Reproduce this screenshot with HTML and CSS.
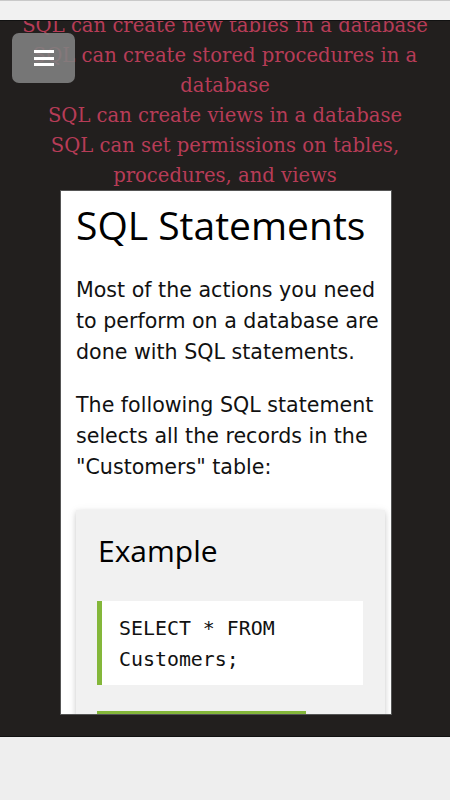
FILE: index.html
```html
<!DOCTYPE html>
<html>
<head>
<meta charset="utf-8">
<link rel="stylesheet" href="styles.css">
</head>
<body>
<div class="topbar"></div>
<div class="main">
  <div class="intro">
    <div class="line">SQL can create new tables in a database</div>
    <div class="line">SQL can create stored procedures in a database</div>
    <div class="line">SQL can create views in a database</div>
    <div class="line">SQL can set permissions on tables, procedures, and views</div>
  </div>
  <div class="card">
    <h1 class="title">SQL Statements</h1>
    <p class="para">Most of the actions you need to perform on a database are done with SQL statements.</p>
    <p class="para">The following SQL statement selects all the records in the "Customers" table:</p>
    <div class="example">
      <h2 class="ex-title">Example</h2>
      <div class="code">SELECT * FROM<br>Customers;</div>
      <div class="btn"></div>
    </div>
  </div>
  <button class="menu" aria-label="menu">
    <span class="bar"></span><span class="bar"></span><span class="bar"></span>
  </button>
</div>
<div class="bottom"></div>
</body>
</html>
```
FILE: styles.css
```css
html, body {
  margin: 0;
  padding: 0;
}
body {
  width: 450px;
  height: 800px;
  overflow: hidden;
  background: #eeeeee;
  font-family: "DejaVu Sans", sans-serif;
}
.topbar {
  height: 19px;
  background: #f1f1f1;
  border-top: 1px solid #c9c9c9;
  border-bottom: 1px solid #111;
}
.main {
  position: relative;
  height: 715px;
  background: #221f1e;
  overflow: hidden;
  border-bottom: 1px solid #111;
}
.intro {
  margin-top: -10px;
  text-align: center;
  font-family: "DejaVu Serif", serif;
  font-size: 19.6px;
  line-height: 30px;
  color: #b73c57;
  padding: 0 16px;
}
.card {
  margin: -1px 0 0 60px;
  height: 523px;
  background: #fff;
  border: 1px solid #555;
  box-sizing: content-box;
  padding: 0 6px 0 15px;
  width: 309px;
  overflow: hidden;
}
.title {
  margin: 4px 0 0 0;
  font-family: "Open Sans", sans-serif;
  font-weight: 400;
  font-size: 39px;
  line-height: 60px;
  color: #000;
}
.para {
  margin: 20px 0 0 0;
  font-size: 20.6px;
  line-height: 31px;
  color: #111;
}
.para + .para {
  margin-top: 22px;
}
.example {
  margin-top: 27px;
  background: #f1f1f1;
  box-shadow: 0 2px 5px rgba(0,0,0,0.16), 0 2px 10px rgba(0,0,0,0.08);
  padding: 18px 22px 20px 21px;
}
.ex-title {
  margin: 0 0 0 1px;
  font-family: "Open Sans", sans-serif;
  font-weight: 400;
  font-size: 30px;
  line-height: 46px;
  color: #000;
}
.code {
  margin-top: 27px;
  background: #fff;
  border-left: 5px solid #84b73a;
  padding: 12px 17px 10px 17px;
  font-family: "DejaVu Sans Mono", monospace;
  font-size: 19.9px;
  line-height: 31px;
  color: #111;
}
.btn {
  margin-top: 26px;
  width: 209px;
  height: 44px;
  background: #84b73a;
}
.menu {
  position: absolute;
  left: 12px;
  top: 12px;
  width: 63px;
  height: 50px;
  border: none;
  border-radius: 7px;
  background: rgba(128,128,128,0.9);
  display: flex;
  flex-direction: column;
  align-items: center;
  justify-content: center;
  gap: 3.5px;
  padding: 0;
}
.bar {
  display: block;
  width: 20px;
  height: 3px;
  background: #fff;
}
.bottom {
  height: 63px;
  background: #eeeeee;
}
```
